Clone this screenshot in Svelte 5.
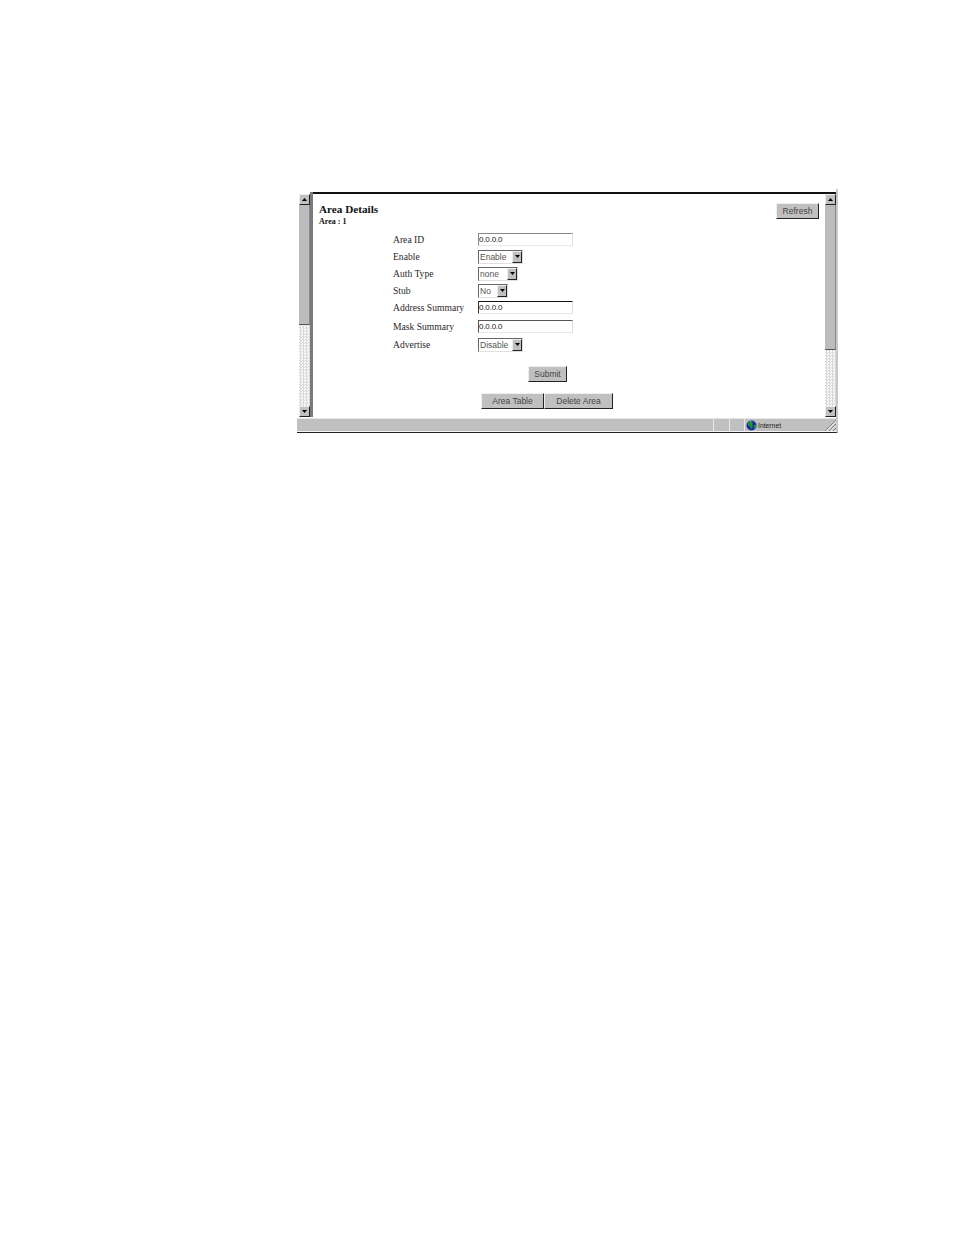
<script>
  const rows = [
    { label: 'Area ID', type: 'input', value: '0.0.0.0', cls: 'r1', tone: 'soft' },
    { label: 'Enable', type: 'select', value: 'Enable', w: 'w45', cls: 'r2' },
    { label: 'Auth Type', type: 'select', value: 'none', w: 'w40', cls: 'r2' },
    { label: 'Stub', type: 'select', value: 'No', w: 'w30', cls: 'r2' },
    { label: 'Address Summary', type: 'input', value: '0.0.0.0', cls: 'r2', tone: 'hard' },
    { label: 'Mask Summary', type: 'input', value: '0.0.0.0', cls: 'r4', tone: 'mid' },
    { label: 'Advertise', type: 'select', value: 'Disable', w: 'w45', cls: 'r5' }
  ];
</script>

{#snippet arrow(up)}
  <svg class="glyph" width="5" height="3" viewBox="0 0 5 3">
    {#if up}<path d="M2.5 0L5 3H0z" fill="#000" />{:else}<path d="M0 0H5L2.5 3z" fill="#000" />{/if}
  </svg>
{/snippet}

{#snippet scrollbar(cls)}
  <div class="scroll {cls}">
    <div class="sbtn">{@render arrow(true)}</div>
    <div class="thumb"></div>
    <div class="track"></div>
    <div class="sbtn">{@render arrow(false)}</div>
  </div>
{/snippet}

<div class="window">
  <div class="main">
    {@render scrollbar('left')}
    <div class="divider"></div>
    <div class="content">
      <div class="head">
        <div>
          <h1>Area Details</h1>
          <p class="sub">Area : 1</p>
        </div>
        <button class="btn refresh">Refresh</button>
      </div>
      <div class="form">
        {#each rows as row}
          <div class="row {row.cls}">
            <span class="label">{row.label}</span>
            {#if row.type === 'input'}
              <input class="field {row.tone}" value={row.value} readonly />
            {:else}
              <div class="select {row.w}">
                <span>{row.value}</span>
                <div class="sarrow">{@render arrow(false)}</div>
              </div>
            {/if}
          </div>
        {/each}
      </div>
      <div class="submit"><button class="btn sub-btn">Submit</button></div>
      <div class="actions">
        <button class="btn table-btn">Area Table</button>
        <button class="btn del-btn">Delete Area</button>
      </div>
    </div>
    {@render scrollbar('right')}
  </div>
  <div class="status">
    <div class="cell grow"></div>
    <div class="cell c16"></div>
    <div class="cell c15"></div>
    <div class="cell zone">
      <svg width="11" height="11" viewBox="0 0 11 11">
        <circle cx="5.5" cy="5.5" r="5" fill="#1a2fa0" />
        <path d="M2 3l3-2 2 1-1 2 1 2-2 3-1-3-2-1zM8 5l2 0 0 2-2 2z" fill="#1f9a2a" />
        <path d="M3 1.5l2-.5 0 1z" fill="#9ad" />
      </svg>
      <span>Internet</span>
    </div>
    <svg class="grip" width="12" height="12" viewBox="0 0 12 12">
      <path d="M12 1L1 12M12 5L5 12M12 9L9 12" stroke="#808080" fill="none" />
      <path d="M12 2.5L2.500 12M12 6.500L6.500 12M12 10.500L10.500 12" stroke="#fff" fill="none" />
    </svg>
  </div>
</div>

<style>
  :global(body) { margin: 0; background: #fff; }
  .window {
    box-sizing: border-box;
    width: 541px;
    height: 244px;
    margin: 189px 0 0 297px;
    display: flex;
    flex-direction: column;
    border-right: 2px solid #c8c8c8;
    border-bottom: 1px solid #222;
    font-family: "Liberation Sans", sans-serif;
  }
  .main { display: flex; height: 229px; padding: 3px 0 0 2px; box-sizing: content-box; }
  .scroll { box-sizing: border-box; width: 11px; display: flex; flex-direction: column; height: 225px; padding-top: 2px; }
  .scroll.right { padding-top: 0; border-top: 2px solid #111; }
  .sbtn {
    box-sizing: border-box; height: 11px; flex: none;
    background: #c0c0c0;
    border: 1px solid; border-color: #eee #222 #222 #eee;
    display: flex; align-items: center; justify-content: center;
  }
  .glyph { display: block; }
  .thumb { background: #bcbcbc; border-right: 1px solid #888; border-bottom: 1px solid #555; box-sizing: border-box; }
  .left .thumb { height: 120px; }
  .right .thumb { height: 145px; }
  .track { flex: 1; background: repeating-conic-gradient(#d8d8d8 0 25%, #fbfbfb 0 50%) 0 0 / 3px 3px; }
  .divider { width: 3px; background: #7a7a7a; height: 225px; }
  .content {
    box-sizing: border-box;
    flex: 1;
    min-width: 0;
    height: 225px;
    border-top: 2px solid #111;
    padding: 7px 6px 0 6px;
    color: #222;
    font-family: "Liberation Serif", serif;
  }
  .head { display: flex; justify-content: space-between; align-items: flex-start; height: 29px; }
  h1 { margin: 2px 0 0; font-size: 11.2px; line-height: 12px; font-weight: 700; color: #111; }
  .sub { margin: 2px 0 0; font-size: 8px; line-height: 10px; font-weight: 700; color: #111; }
  .btn {
    box-sizing: border-box;
    padding: 0;
    background: #c0c0c0;
    border: 1px solid;
    border-color: #efefef #222 #222 #efefef;
    border-radius: 0;
    font-family: "Liberation Sans", sans-serif;
    font-size: 8.5px;
    color: #444;
    display: block;
  }
  .refresh { width: 43px; height: 16px; margin-top: 2px; }
  .form { margin-left: 74px; }
  .row { display: flex; align-items: center; }
  .r1 { height: 18px; }
  .r2 { height: 17px; }
  .r4 { height: 21px; }
  .r5 { height: 15px; }
  .label { width: 85px; font-size: 9.6px; color: #2a2a2a; flex: none; }
  .field {
    box-sizing: border-box;
    width: 95px; height: 13px;
    padding: 0;
    margin: 0;
    border: 1px solid;
    border-color: #555 #ddd #e8e8e8 #555;
    outline: none;
    background: #fff;
    font-family: "Liberation Sans", sans-serif;
    font-size: 8px;
    letter-spacing: -.15px;
    color: #222;
  }
  .field.soft { border-color: #888 #ddd #e8e8e8 #888; }
  .field.hard { border-top-color: #111; border-left-color: #333; }
  .select {
    box-sizing: border-box;
    height: 14px;
    display: flex; align-items: center; justify-content: space-between;
    border: 1px solid; border-color: #666 #e0e0e0 #e0e0e0 #666;
    padding-left: 1px;
    font-family: "Liberation Sans", sans-serif;
    font-size: 8.5px;
    color: #555;
    background: #fff;
  }
  .w45 { width: 45px; }
  .w40 { width: 40px; }
  .w30 { width: 30px; }
  .sarrow {
    box-sizing: border-box;
    width: 10px; height: 12px; flex: none;
    background: #c0c0c0;
    border: 1px solid; border-color: #eee #222 #222 #eee;
    display: flex; align-items: center; justify-content: center;
  }
  .submit { margin: 14px 0 0 209px; }
  .sub-btn { width: 39px; height: 16px; }
  .actions { display: flex; margin: 11px 0 0 162px; }
  .table-btn { width: 63px; height: 16px; }
  .del-btn { width: 69px; height: 16px; }
  .status {
    box-sizing: border-box;
    height: 14px;
    margin-top: -1px;
    background: #c0c0c0;
    border-top: 1px solid #e6e6e6;
    border-bottom: 1px solid #f4f4f4;
    display: flex;
    align-items: stretch;
    position: relative;
  }
  .cell { box-sizing: border-box; border-left: 1px solid #e8e8e8; }
  .grow { flex: 1; border-left: 0; }
  .c16 { width: 16px; }
  .c15 { width: 15px; }
  .zone {
    width: 92px;
    display: flex; align-items: center; gap: 1px;
    padding-left: 1px;
    font-size: 6.8px;
    color: #222;
  }
  .grip { position: absolute; right: 0; bottom: 0; }
</style>
